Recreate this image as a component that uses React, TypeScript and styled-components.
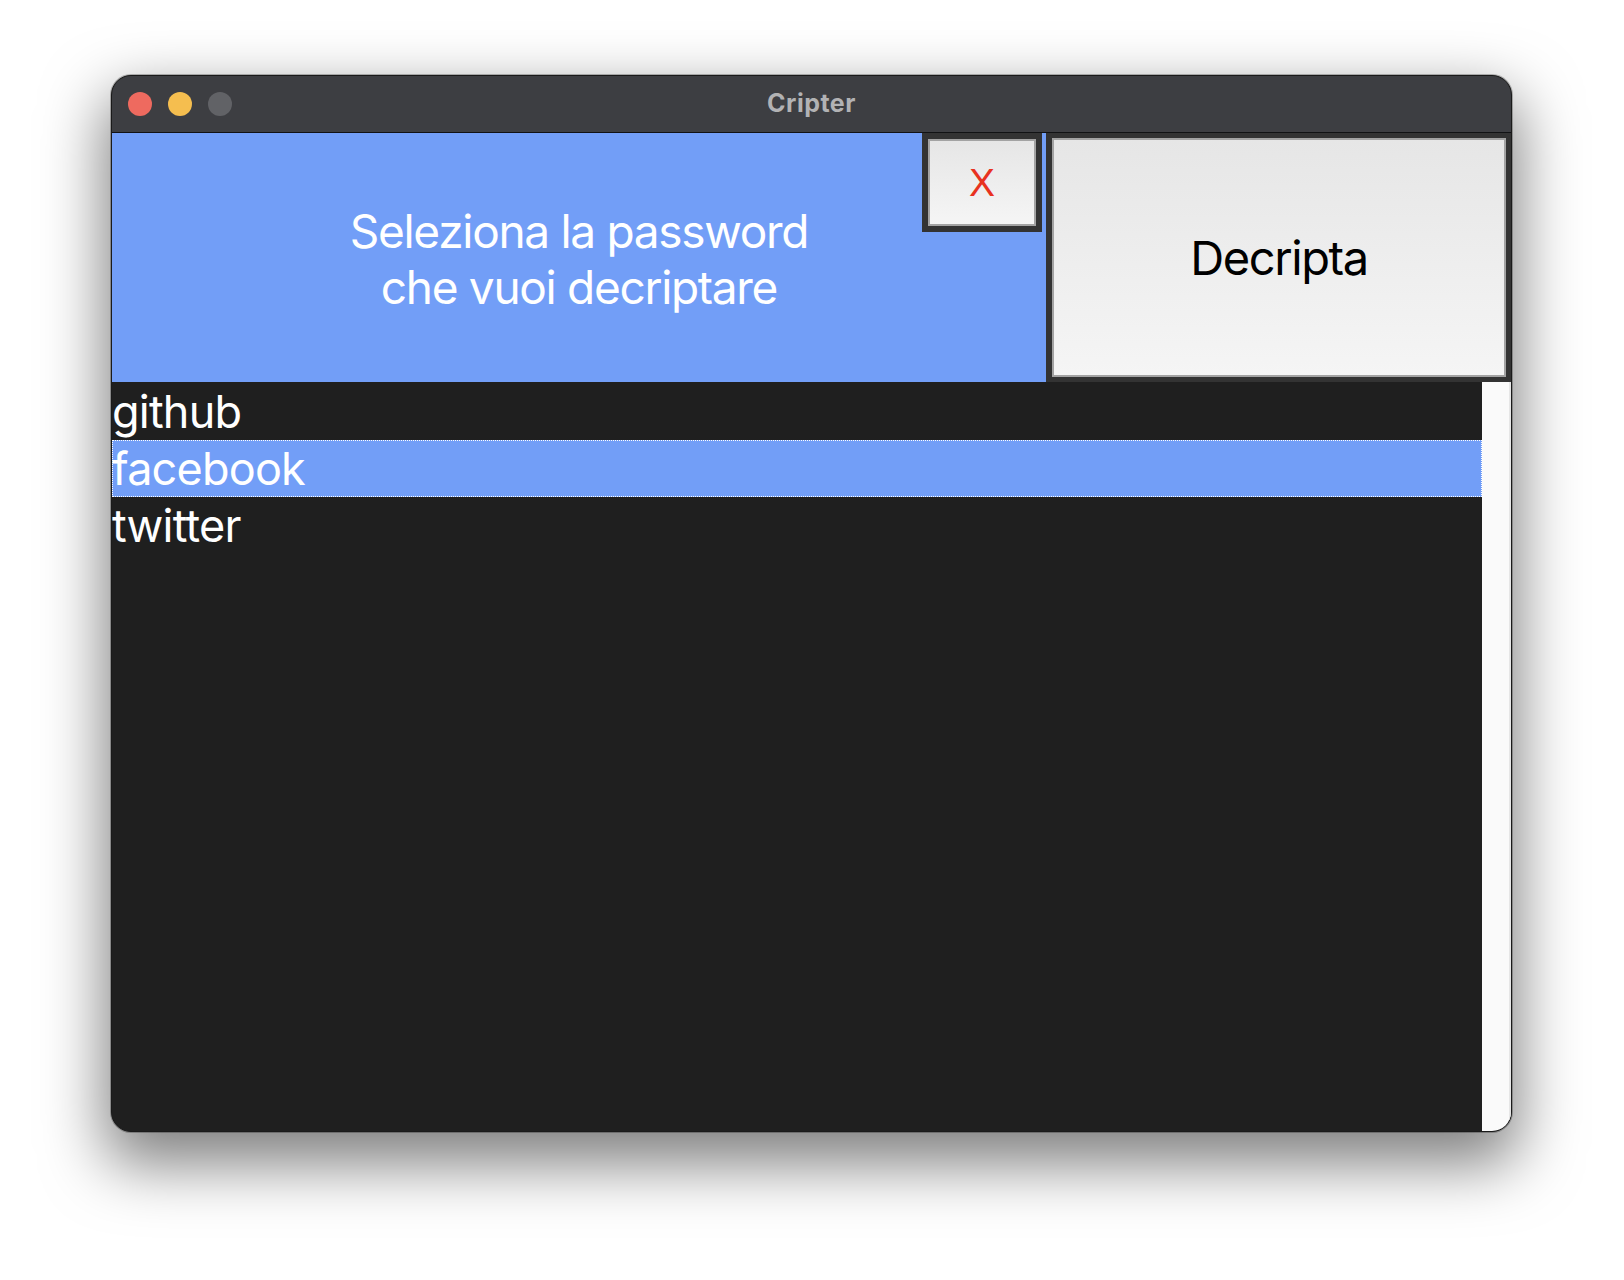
import React from "react";
import styled, { createGlobalStyle } from "styled-components";

const GlobalStyle = createGlobalStyle`
  html, body {
    margin: 0;
    padding: 0;
    background: #ffffff;
  }
  body {
    font-family: Inter, "Liberation Sans", Arial, sans-serif;
  }
  * { box-sizing: border-box; }
`;

const Page = styled.div`
  width: 1624px;
  height: 1280px;
  padding: 75px 0 0 111px;
  background: #ffffff;
`;

const Window = styled.div`
  width: 1401px;
  height: 1057px;
  border: 1px solid #1a1a1a;
  border-radius: 20px;
  overflow: hidden;
  display: grid;
  grid-template-rows: 57px 249px 1fr;
  background: #1f1f1f;
  box-shadow: 0 26px 62px 6px rgba(0, 0, 0, 0.5), 0 0 0 1px rgba(0, 0, 0, 0.25);
`;

const TitleBar = styled.div`
  display: grid;
  grid-template-columns: 1fr auto 1fr;
  align-items: center;
  background: #3d3e42;
  border-bottom: 1px solid #111214;
  padding: 0 16px;
`;

const Lights = styled.div`
  display: flex;
  gap: 16px;
  align-items: center;
`;

const Light = styled.span<{ $color: string }>`
  width: 24px;
  height: 24px;
  border-radius: 50%;
  background: ${(p) => p.$color};
`;

const Title = styled.div`
  font-family: Inter, "Liberation Sans", sans-serif;
  font-weight: 700;
  font-size: 25px;
  color: #b2b2b4;
  letter-spacing: 0.5px;
  padding-bottom: 2px;
`;

const Header = styled.div`
  display: grid;
  grid-template-columns: 934px 1fr;
`;

const BluePanel = styled.div`
  position: relative;
  background: #729ef7;
  display: flex;
  align-items: center;
  justify-content: center;
`;

const Prompt = styled.div`
  font-family: Inter, "Liberation Sans", sans-serif;
  font-size: 46px;
  line-height: 56px;
  color: #ffffff;
  text-align: center;
  letter-spacing: -1.3px;
  padding-top: 2px;
`;

const CloseFrame = styled.div`
  position: absolute;
  top: 0;
  right: 4px;
  width: 120px;
  height: 99px;
  background: #333333;
  padding: 6px;
`;

const FaceButton = styled.button`
  width: 100%;
  height: 100%;
  margin: 0;
  border: 2px solid #a3a3a3;
  background: linear-gradient(#e6e6e6, #f5f5f5);
  display: flex;
  align-items: center;
  justify-content: center;
  padding: 0;
  cursor: pointer;
`;

const CloseLabel = styled.span`
  font-family: "Liberation Sans", Arial, sans-serif;
  font-size: 39px;
  color: #e8321f;
  line-height: 1;
`;

const ActionFrame = styled.div`
  background: #333333;
  padding: 5px 5px 5px 6px;
`;

const ActionLabel = styled.span`
  font-family: Inter, "Liberation Sans", sans-serif;
  font-size: 47px;
  color: #000000;
  letter-spacing: -1.4px;
`;

const ListArea = styled.div`
  display: grid;
  grid-template-columns: 1fr 29px;
  min-height: 0;
`;

const List = styled.ul`
  list-style: none;
  margin: 0;
  padding: 1px 0 0 0;
  background: #1f1f1f;
`;

const Item = styled.li<{ $selected?: boolean }>`
  height: 57px;
  line-height: 58px;
  font-family: Inter, "Liberation Sans", sans-serif;
  font-size: 45px;
  color: #ffffff;
  letter-spacing: -0.8px;
  padding-left: 0;
  background: ${(p) => (p.$selected ? "#729ef7" : "transparent")};
  outline: ${(p) => (p.$selected ? "1px dotted #ffffff" : "none")};
  outline-offset: -1px;
`;

const ScrollStrip = styled.div`
  background: #fafafa;
  border-right: 2px solid #e6e6e6;
`;

const items = ["github", "facebook", "twitter"];

export default function App() {
  return (
    <>
      <GlobalStyle />
      <Page>
        <Window>
          <TitleBar>
            <Lights>
              <Light $color="#ee6a5f" />
              <Light $color="#f5be4f" />
              <Light $color="#616266" />
            </Lights>
            <Title>Cripter</Title>
            <div />
          </TitleBar>
          <Header>
            <BluePanel>
              <Prompt>
                Seleziona la password
                <br />
                che vuoi decriptare
              </Prompt>
              <CloseFrame>
                <FaceButton>
                  <CloseLabel>X</CloseLabel>
                </FaceButton>
              </CloseFrame>
            </BluePanel>
            <ActionFrame>
              <FaceButton>
                <ActionLabel>Decripta</ActionLabel>
              </FaceButton>
            </ActionFrame>
          </Header>
          <ListArea>
            <List>
              {items.map((it) => (
                <Item key={it} $selected={it === "facebook"}>
                  {it}
                </Item>
              ))}
            </List>
            <ScrollStrip />
          </ListArea>
        </Window>
      </Page>
    </>
  );
}
